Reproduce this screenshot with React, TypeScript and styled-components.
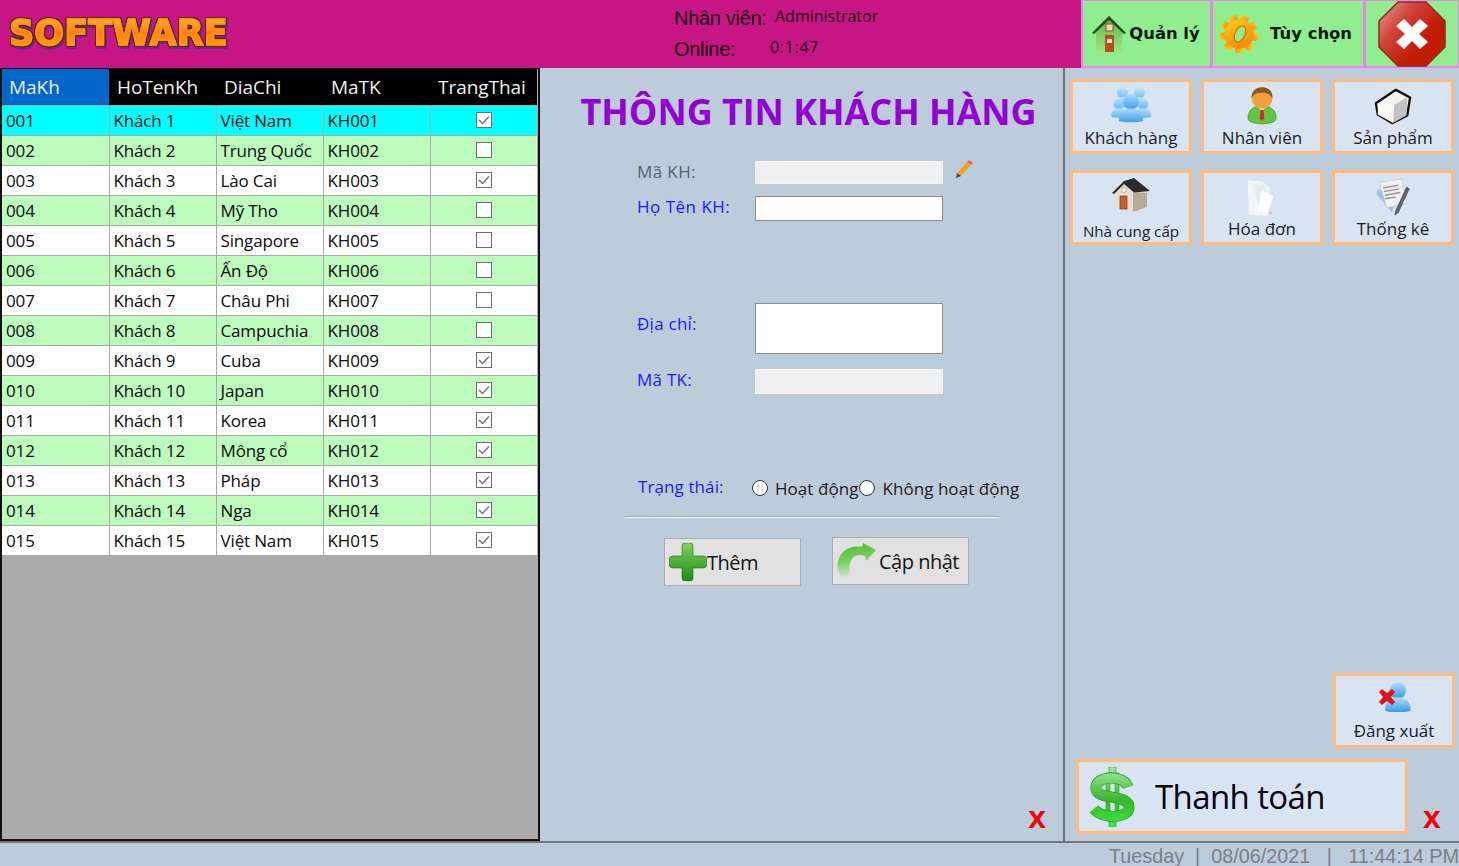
import React from "react";
import styled, { createGlobalStyle } from "styled-components";

const Global = createGlobalStyle`
  html, body { margin: 0; padding: 0; height: 100%; overflow: hidden; }
  body { font-family: "Open Sans", "Noto Sans", "Liberation Sans", sans-serif; background: #bdccda; }
  #root { height: 100%; }
`;

const Page = styled.div`
  width: 1459px; height: 866px; display: flex; flex-direction: column; background: #bdccda; overflow: hidden;
`;
const Header = styled.header`
  height: 68px; flex: none; background: #c71585; display: flex; align-items: stretch; position: relative;
`;
const LogoWrap = styled.div`
  width: 674px; flex: none; padding: 11px 0 0 9px; box-sizing: border-box;
`;
const Logo = styled.div`
  display: inline-block;
  font-family: "DejaVu Sans", sans-serif; font-weight: 700; font-size: 35px; line-height: 44px;
  letter-spacing: 0.15px;
  color: transparent;
  background: linear-gradient(180deg, #ffb43a 10%, #ff7f10 50%, #fba400 90%);
  -webkit-background-clip: text; background-clip: text;
  -webkit-text-stroke: 1.4px #ff9414;
  filter: drop-shadow(1px 0 0 #5c2a14) drop-shadow(-1px 0 0 #5c2a14) drop-shadow(0 -1px 0 #5c2a14) drop-shadow(0 1px 0 #5c2a14) drop-shadow(1px 2px 0 #7d1f98);
`;
const Info = styled.div`
  width: 407px; flex: none; display: grid; grid-template-columns: 96px 1fr; grid-template-rows: 31px 33px;
  color: #1a0612; font-family: "Liberation Sans", sans-serif;
`;
const InfoLabel = styled.div`
  font-size: 20px; line-height: 36px; letter-spacing: -0.3px; white-space: nowrap;
`;
const InfoValue = styled.div<{ $shift: number; $spread?: number }>`
  font-family: "Open Sans", sans-serif;
  font-size: 16px; line-height: 33px; padding-left: ${(p) => p.$shift}px; letter-spacing: ${(p) => p.$spread ?? 0}px; white-space: nowrap;
`;
const TopButton = styled.button<{ $w: number; $gap?: number; $pad?: number }>`
  width: ${(p) => p.$w}px; flex: none; height: 68px; box-sizing: border-box; border: 2px solid #ee82ee; border-top-width: 1px; border-right-width: 1px;
  background: #90ee90; padding: 0 ${(p) => p.$pad ?? 0}px 0 0; display: flex; align-items: center; justify-content: center; gap: ${(p) => p.$gap ?? 3}px;
  font-family: "DejaVu Sans", sans-serif; font-weight: 700; font-size: 16.4px; color: #07170a; margin: 0;
`;

const Main = styled.main`
  flex: 1; display: flex; min-height: 0;
`;
const TablePanel = styled.section`
  width: 540px; flex: none; box-sizing: border-box; border: 2px solid #111; border-top: 1px solid #111; background: #ababab; overflow: hidden;
`;
const Table = styled.table`
  border-collapse: collapse; table-layout: fixed; width: 535px;
`;
const Th = styled.th<{ $active?: boolean; $w: number }>`
  width: ${(p) => p.$w}px; height: 36px; padding: 1px 0 0 ${(p) => (p.$active ? 7 : 8)}px; box-sizing: border-box; text-align: left; font-weight: 400; font-size: 19px;
  font-family: "Open Sans", sans-serif; letter-spacing: -0.05px;
  color: #f0f0f0; background: ${(p) => (p.$active ? "#0366c9" : "#000")}; white-space: nowrap;
`;
const Row = styled.tr<{ $tone: "sel" | "alt" | "plain" }>`
  height: 30px;
  background: ${(p) => (p.$tone === "sel" ? "#00ffff" : p.$tone === "alt" ? "#bdfcbd" : "#fff")};
`;
const Td = styled.td`
  border: 1px solid #a9a9a9; border-left: 0; padding: 0 0 0 4px; box-sizing: border-box; font-size: 17px; letter-spacing: -0.15px; color: #0b0b0b; white-space: nowrap; overflow: hidden; height: 30px;
  &:last-child { border-right: 0; padding: 0; }
`;
const Check = styled.span`
  display: flex; margin: 0 auto; width: 16px; height: 16px; box-sizing: border-box; border: 1.5px solid #6e6e6e; background: #fff; align-items: center; justify-content: center;
`;

const Center = styled.section`
  flex: 1; min-width: 0; display: flex; flex-direction: column; border-right: 2px solid #6e7378;
`;
const Title = styled.h1`
  margin: 21px 0 0; height: 46px; font-family: "Open Sans", sans-serif; font-weight: 700; font-size: 36px; line-height: 46px; letter-spacing: -0.05px;
  color: #9400d3; text-align: center; transform: translateX(7px); white-space: nowrap;
`;
const Form = styled.div`
  padding: 26px 0 0 97px; display: flex; flex-direction: column;
`;
const Field = styled.div<{ $top: number }>`
  display: flex; align-items: flex-start; margin-top: ${(p) => p.$top}px;
`;
const Label = styled.label<{ $muted?: boolean; $drop?: number; $spread?: number }>`
  width: 118px; flex: none; color: ${(p) => (p.$muted ? "#566470" : "#1a1aff")}; font-size: 17px; line-height: 22px; letter-spacing: ${(p) => p.$spread ?? 0.25}px; font-family: "Open Sans", sans-serif;
  padding-top: ${(p) => p.$drop ?? 0}px;
`;
const TextBox = styled.div<{ $disabled?: boolean; $h: number }>`
  width: 188px; height: ${(p) => p.$h}px; box-sizing: border-box;
  background: ${(p) => (p.$disabled ? "#f0f0f0" : "#fff")};
  border: 1px solid ${(p) => (p.$disabled ? "#f4f4f4" : "#8e8e8e")};
`;
const Pencil = styled.span`
  display: block; margin: -3px 0 0 10px; width: 20px; height: 22px;
`;
const StatusRow = styled.div`
  display: flex; align-items: center; margin-top: 82px; height: 24px; font-size: 17px; letter-spacing: 0.05px; color: #241a20;
`;
const StatusLabel = styled.span`
  width: 114px; margin-left: 1px; flex: none; color: #1a1aff; font-size: 17px; letter-spacing: 0.1px; position: relative; top: -2px;
`;
const Radio = styled.span`
  width: 16px; height: 16px; flex: none; box-sizing: border-box; border-radius: 50%; background: #fff; border: 1px solid #333; margin-right: 7px;
`;
const RadioText = styled.span`
  white-space: nowrap; margin-right: 1px;
`;
const Divider = styled.hr`
  width: 374px; height: 2px; margin: 16px 0 0 -12px; border: 0; background: linear-gradient(180deg, #a6a6a6 0 50%, #fff 50% 100%);
`;
const ActionRow = styled.div`
  display: flex; margin: 19px 0 0 27px; gap: 31px;
`;
const ActionButton = styled.button<{ $gap: number; $shift: number }>`
  width: 137px; height: 48px; box-sizing: border-box; background: #e1e1e1; border: 1px solid #adadad; padding: 0 0 0 4px; margin: 0;
  position: relative; top: ${(p) => p.$shift}px;
  display: flex; align-items: center; gap: ${(p) => p.$gap}px; font-family: "Open Sans", sans-serif; font-size: 20px; letter-spacing: -0.5px; color: #151515; white-space: nowrap;
`;
const CloseX = styled.div`
  font-family: "Liberation Sans", sans-serif; font-weight: 700; font-size: 32px; line-height: 28px; color: #f80000;
`;
const CenterFoot = styled.div`
  margin-top: auto; display: flex; justify-content: flex-end; padding: 0 17px 10px 0;
`;

const Side = styled.aside`
  width: 394px; flex: none; display: flex; flex-direction: column; padding: 11px 4px 7px 5px; box-sizing: border-box;
`;
const Tiles = styled.div`
  display: grid; grid-template-columns: 122px 122px 122px; column-gap: 9px; row-gap: 16px;
`;
const Tile = styled.button<{ $h?: number }>`
  width: 100%; height: ${(p) => p.$h ?? 75}px; box-sizing: border-box; border: 3px solid #fdbc7e; background: #d8e4f2; padding: 5px 0 0; margin: 0;
  display: flex; flex-direction: column; align-items: center; justify-content: flex-start;
  font-family: "Open Sans", sans-serif; color: #1a1a2a;
`;
const TileText = styled.span<{ $size?: number; $top?: number }>`
  font-size: ${(p) => p.$size ?? 17}px; line-height: 22px; letter-spacing: 0; white-space: nowrap; margin-top: ${(p) => p.$top ?? 1}px;
`;
const SideBottom = styled.div`
  margin-top: auto; display: flex; flex-direction: column;
`;
const LogoutRow = styled.div`
  display: flex; justify-content: flex-end;
`;
const LogoutTile = styled(Tile)`
  width: 122px;
`;
const PayRow = styled.div`
  display: flex; align-items: flex-end; margin: 11px 0 0 6px;
`;
const PayButton = styled.button`
  width: 332px; height: 75px; box-sizing: border-box; border: 3px solid #fdbc7e; background: #d8e4f2; padding: 0 0 0 8px; margin: 0;
  display: flex; align-items: center; gap: 18px; font-family: "Open Sans", sans-serif; font-size: 33px; color: #050510; letter-spacing: -0.6px;
`;
const PayX = styled(CloseX)`
  margin: 0 0 3px 15px;
`;
const StatusBar = styled.footer`
  height: 25px; flex: none; box-sizing: border-box; border-top: 2px solid #777; background: #bdccda; display: flex; justify-content: flex-end; align-items: center;
  font-family: "Liberation Sans", sans-serif; font-size: 19.8px; color: #7b7f86; white-space: pre; padding-top: 3px;
`;

const CheckMark = () => (
  <svg width="12" height="10" viewBox="0 0 12 10"><path d="M1 5l3.5 3.5L11 1.5" fill="none" stroke="#777" strokeWidth="1.5" /></svg>
);

const HomeIcon = () => (
  <svg width="38" height="38" viewBox="0 0 36 38">
    <defs><linearGradient id="hg" x1="0" y1="0" x2="0" y2="1"><stop offset="0" stopColor="#5fae45" /><stop offset="1" stopColor="#9be87f" /></linearGradient></defs>
    <path d="M18 1L1 18h4v19h26V18h4z" fill="url(#hg)" />
    <path d="M18 1L1 18l2 1L18 5l15 14 2-1z" fill="#23491c" />
    <rect x="14" y="20" width="9" height="17" fill="#b4501c" /><rect x="16" y="24" width="5" height="4" fill="#f2e2c8" />
    <rect x="15" y="9" width="7" height="7" fill="#f3d9b4" stroke="#8a4a20" />
  </svg>
);
const GearIcon = () => {
  const teeth = Array.from({ length: 9 }, (_, i) => i * 40);
  return (
    <svg width="40" height="40" viewBox="0 0 40 40">
      <defs><linearGradient id="gg" x1="0" y1="0" x2="1" y2="1"><stop offset="0" stopColor="#ffd21c" /><stop offset="1" stopColor="#f47a08" /></linearGradient></defs>
      <g transform="rotate(20 20 20)">
        {teeth.map((a) => <rect key={a} x="16" y="1" width="8" height="9" rx="1.5" fill="url(#gg)" transform={`rotate(${a} 20 20)`} />)}
        <ellipse cx="20" cy="20" rx="14.5" ry="14.5" fill="url(#gg)" />
      </g>
      <ellipse cx="21" cy="20" rx="5" ry="8.5" fill="#90ee90" stroke="#d96a05" strokeWidth="1.2" transform="rotate(25 21 20)" />
    </svg>
  );
};
const StopIcon = () => (
  <svg width="68" height="66" viewBox="0 0 68 66">
    <defs><linearGradient id="sg" x1="0" y1="0" x2="1" y2="0.8"><stop offset="0" stopColor="#e8a59b" /><stop offset="0.35" stopColor="#d1443a" /><stop offset="0.7" stopColor="#c21c08" /></linearGradient></defs>
    <path d="M20 1h28l19 19v26L48 65H20L1 46V20z" fill="url(#sg)" stroke="#8c2a20" strokeWidth="1.5" />
    <path d="M26 19l8 8 8-8 8 7-9 8 9 8-8 7-8-8-8 8-8-7 9-8-9-8z" fill="#fff" transform="translate(0 -1)" />
  </svg>
);
const Person = ({ x, y, s, c1, c2, id }: { x: number; y: number; s: number; c1: string; c2: string; id: string }) => (
  <g transform={`translate(${x} ${y}) scale(${s})`}>
    <defs><linearGradient id={id} x1="0" y1="0" x2="0" y2="1"><stop offset="0" stopColor={c1} /><stop offset="1" stopColor={c2} /></linearGradient></defs>
    <circle cx="10" cy="6.5" r="6.5" fill={`url(#${id})`} />
    <path d="M0 22c0-7 4-10 10-10s10 3 10 10c0 2-20 2-20 0z" fill={`url(#${id})`} />
  </g>
);
const PeopleIcon = () => (
  <svg width="40" height="38" viewBox="0 0 40 38">
    <Person id="p1" x={3} y={0} s={0.85} c1="#c4e6ff" c2="#74bdf4" />
    <Person id="p2" x={20} y={0} s={0.85} c1="#c4e6ff" c2="#74bdf4" />
    <Person id="p3" x={0} y={12} s={0.8} c1="#b5dfff" c2="#64b5f2" />
    <Person id="p4" x={24} y={12} s={0.8} c1="#b5dfff" c2="#64b5f2" />
    <Person id="p5" x={8} y={7} s={1.2} c1="#a8dbff" c2="#3f9fe9" />
  </svg>
);
const StaffIcon = () => (
  <svg width="32" height="38" viewBox="0 0 34 40">
    <path d="M2 33c0-10 7-13 15-13s15 3 15 13c0 8-30 8-30 0z" fill="#5fc83c" stroke="#2f8a1a" strokeWidth=".6" />
    <path d="M13 21h8l-4 5z" fill="#fff" /><path d="M15.5 24h3l1 9-2.5 3-2.5-3z" fill="#d8242a" />
    <circle cx="17" cy="12" r="11" fill="#f2a23a" />
    <path d="M6 12C5 3 12 0 17 0s12 3 11 12c-2-5-6-6-11-6s-9 1-11 6z" fill="#8a5a1e" />
  </svg>
);
const CubeIcon = () => (
  <svg width="40" height="38" viewBox="0 0 42 40">
    <path d="M3 17L24 3l15 8-3 19-16 8-15-9z" fill="#f2f2f2" stroke="#111" strokeWidth="2.5" strokeLinejoin="round" />
    <path d="M22 19l14-8-1 19-14 8z" fill="#c2c2c2" /><path d="M5 17l17 2-1 19-16-9z" fill="#fafafa" />
  </svg>
);
const SupplierIcon = () => (
  <svg width="40" height="36" viewBox="0 0 40 36">
    <path d="M4 14l9-8 9 8v20L4 30z" fill="#e9dfcf" />
    <path d="M22 14l14 1v14l-14 5z" fill="#b9ab98" />
    <path d="M1 15L13 3l10-3 16 13-16 1.5L13 6 3 16z" fill="#2c2c2c" />
    <rect x="9" y="18" width="7" height="13" fill="#c8622a" stroke="#7a3a15" strokeWidth=".7" />
    <rect x="11" y="10" width="4" height="4" fill="#fff" stroke="#777" strokeWidth=".5" />
  </svg>
);
const DocsIcon = () => (
  <svg width="34" height="40" viewBox="0 0 34 42">
    <path d="M2 2l16 2 7 6-2 30-20-2z" fill="#f2f5f8" />
    <path d="M7 6l14 2 4 25-10 4z" fill="#e6ebef" />
    <path d="M17 13l12 6-6 18-11-2z" fill="#fff" /><circle cx="26" cy="37" r=".8" fill="#889" />
  </svg>
);
const ReportIcon = () => (
  <svg width="38" height="38" viewBox="0 0 40 42">
    <path d="M3 12l20 11-4 15L2 18z" fill="#9cc4e8" />
    <path d="M5 5L30 1l5 27-22 5z" fill="#f0f0f0" stroke="#b5c0c8" strokeWidth=".6" />
    <g stroke="#9a9a9a" strokeWidth="1.6"><path d="M9 11l17-3" /><path d="M10 15l17-3" /><path d="M11 19l17-3" /><path d="M11 23l12-2" /></g>
    <path d="M35 10l3 2-12 26-4 3 1-5z" fill="#5a6670" stroke="#2c3338" strokeWidth=".5" />
  </svg>
);
const LogoutIcon = () => (
  <svg width="34" height="36" viewBox="0 0 34 36">
    <Person id="p6" x={8} y={1} s={1.28} c1="#b3e0ff" c2="#3a98e6" />
    <path d="M3 12l3-3 5 4 5-4 3 3-4 5 4 5-3 3-5-4-5 4-3-3 4-5z" fill="#e0141c" transform="translate(-1 -1)" />
  </svg>
);
const DollarIcon = () => (
  <svg width="50" height="60" viewBox="0 0 50 60">
    <defs><linearGradient id="dg" gradientUnits="userSpaceOnUse" x1="0" y1="0" x2="0" y2="60"><stop offset="0" stopColor="#a3e89e" /><stop offset="0.55" stopColor="#36b82f" /><stop offset="1" stopColor="#3fe83a" /></linearGradient></defs>
    <path d="M22 0h7v6h-7zM22 53h7v7h-7zM19 6h4v48h-4zM28 6h4v48h-4z" fill="url(#dg)" stroke="#2a9a25" strokeWidth=".6" />
    <path d="M41 20C38 11 25 10 17 12C7 15 6 25 15 28C24 31 43 30 42 41C41 52 15 52 7 42" fill="none" stroke="#2a9a25" strokeWidth="11" />
    <path d="M41 20C38 11 25 10 17 12C7 15 6 25 15 28C24 31 43 30 42 41C41 52 15 52 7 42" fill="none" stroke="url(#dg)" strokeWidth="9.6" />
  </svg>
);
const PencilIcon = () => (
  <svg width="20" height="22" viewBox="0 0 20 22">
    <path d="M4 15L14 4l4 3L8 18z" fill="#f2a21c" /><path d="M14 4l2-2 4 3-2 2z" fill="#e8636a" /><path d="M4 15l4 3-5 2z" fill="#444" />
  </svg>
);
const PlusIcon = () => (
  <svg width="38" height="38" viewBox="0 0 38 38">
    <defs><linearGradient id="plg" x1="0" y1="0" x2="0" y2="1"><stop offset="0" stopColor="#7ed45a" /><stop offset="1" stopColor="#1f8a1a" /></linearGradient></defs>
    <path d="M13 3a3 3 0 0 1 3-3h5a3 3 0 0 1 3 3v10h10a4 4 0 0 1 4 4v4a4 4 0 0 1-4 4H24v10a3 3 0 0 1-3 3h-5a3 3 0 0 1-3-3V25H4a4 4 0 0 1-4-4v-4a4 4 0 0 1 4-4h9z" fill="url(#plg)" stroke="#17721a" strokeWidth=".6" />
  </svg>
);
const RefreshIcon = () => (
  <svg width="39" height="36" viewBox="0 0 39 36">
    <defs><linearGradient id="rg" x1="0.1" y1="0" x2="0.3" y2="1"><stop offset="0" stopColor="#4cb82f" /><stop offset="0.55" stopColor="#7ad25e" /><stop offset="1" stopColor="#e1e1e1" /></linearGradient></defs>
    <path d="M1 28C-2 12 10 1 25 4l1-4 13 7-10 11-1-5C19 10 10 14 13 34 8 36 3 33 1 28z" fill="url(#rg)" />
  </svg>
);

const rows: [string, string, string, string, boolean][] = [
  ["001", "Khách 1", "Việt Nam", "KH001", true],
  ["002", "Khách 2", "Trung Quốc", "KH002", false],
  ["003", "Khách 3", "Lào Cai", "KH003", true],
  ["004", "Khách 4", "Mỹ Tho", "KH004", false],
  ["005", "Khách 5", "Singapore", "KH005", false],
  ["006", "Khách 6", "Ấn Độ", "KH006", false],
  ["007", "Khách 7", "Châu Phi", "KH007", false],
  ["008", "Khách 8", "Campuchia", "KH008", false],
  ["009", "Khách 9", "Cuba", "KH009", true],
  ["010", "Khách 10", "Japan", "KH010", true],
  ["011", "Khách 11", "Korea", "KH011", true],
  ["012", "Khách 12", "Mông cổ", "KH012", true],
  ["013", "Khách 13", "Pháp", "KH013", true],
  ["014", "Khách 14", "Nga", "KH014", true],
  ["015", "Khách 15", "Việt Nam", "KH015", true],
];

export default function App() {
  return (
    <Page>
      <Global />
      <Header>
        <LogoWrap><Logo>SOFTWARE</Logo></LogoWrap>
        <Info>
          <InfoLabel>Nhân viên:</InfoLabel>
          <InfoValue $shift={5}>Administrator</InfoValue>
          <InfoLabel>Online:</InfoLabel>
          <InfoValue $shift={0} $spread={0.7}>0:1:47</InfoValue>
        </Info>
        <TopButton $w={130} $gap={1} $pad={3}><HomeIcon />Quản lý</TopButton>
        <TopButton $w={153} $gap={11} $pad={5}><GearIcon />Tùy chọn</TopButton>
        <TopButton $w={95}><StopIcon /></TopButton>
      </Header>
      <Main>
        <TablePanel>
          <Table>
            <thead>
              <tr>
                <Th $active $w={107}>MaKh</Th>
                <Th $w={107}>HoTenKh</Th>
                <Th $w={107}>DiaChi</Th>
                <Th $w={107}>MaTK</Th>
                <Th $w={107}>TrangThai</Th>
              </tr>
            </thead>
            <tbody>
              {rows.map((r, i) => (
                <Row key={r[0]} $tone={i === 0 ? "sel" : i % 2 === 1 ? "alt" : "plain"}>
                  <Td>{r[0]}</Td>
                  <Td>{r[1]}</Td>
                  <Td>{r[2]}</Td>
                  <Td>{r[3]}</Td>
                  <Td><Check>{r[4] && <CheckMark />}</Check></Td>
                </Row>
              ))}
            </tbody>
          </Table>
        </TablePanel>
        <Center>
          <Title>THÔNG TIN KHÁCH HÀNG</Title>
          <Form>
            <Field $top={0}>
              <Label $muted $spread={0.4}>Mã KH:</Label>
              <TextBox $disabled $h={23} />
              <Pencil><PencilIcon /></Pencil>
            </Field>
            <Field $top={12}>
              <Label $spread={0.5}>Họ Tên KH:</Label>
              <TextBox $h={25} />
            </Field>
            <Field $top={82}>
              <Label $drop={10}>Địa chỉ:</Label>
              <TextBox $h={51} />
            </Field>
            <Field $top={15}>
              <Label>Mã TK:</Label>
              <TextBox $disabled $h={25} />
            </Field>
            <StatusRow>
              <StatusLabel>Trạng thái:</StatusLabel>
              <Radio /><RadioText>Hoạt động</RadioText>
              <Radio /><RadioText>Không hoạt động</RadioText>
            </StatusRow>
            <Divider />
            <ActionRow>
              <ActionButton $gap={0} $shift={1}><PlusIcon />Thêm</ActionButton>
              <ActionButton $gap={3} $shift={0}><RefreshIcon />Cập nhật</ActionButton>
            </ActionRow>
          </Form>
          <CenterFoot><CloseX>x</CloseX></CenterFoot>
        </Center>
        <Side>
          <Tiles>
            <Tile><PeopleIcon /><TileText $top={2}>Khách hàng</TileText></Tile>
            <Tile><StaffIcon /><TileText $top={2}>Nhân viên</TileText></Tile>
            <Tile><CubeIcon /><TileText $top={2}>Sản phẩm</TileText></Tile>
            <Tile><SupplierIcon /><TileText $size={15.2} $top={6}>Nhà cung cấp</TileText></Tile>
            <Tile><DocsIcon /><TileText $top={0}>Hóa đơn</TileText></Tile>
            <Tile><ReportIcon /><TileText $top={2}>Thống kê</TileText></Tile>
          </Tiles>
          <SideBottom>
            <LogoutRow>
              <LogoutTile><LogoutIcon /><TileText $top={3}>Đăng xuất</TileText></LogoutTile>
            </LogoutRow>
            <PayRow>
              <PayButton><DollarIcon />Thanh toán</PayButton>
              <PayX>x</PayX>
            </PayRow>
          </SideBottom>
        </Side>
      </Main>
      <StatusBar>Tuesday  |  08/06/2021   |   11:44:14 PM</StatusBar>
    </Page>
  );
}
